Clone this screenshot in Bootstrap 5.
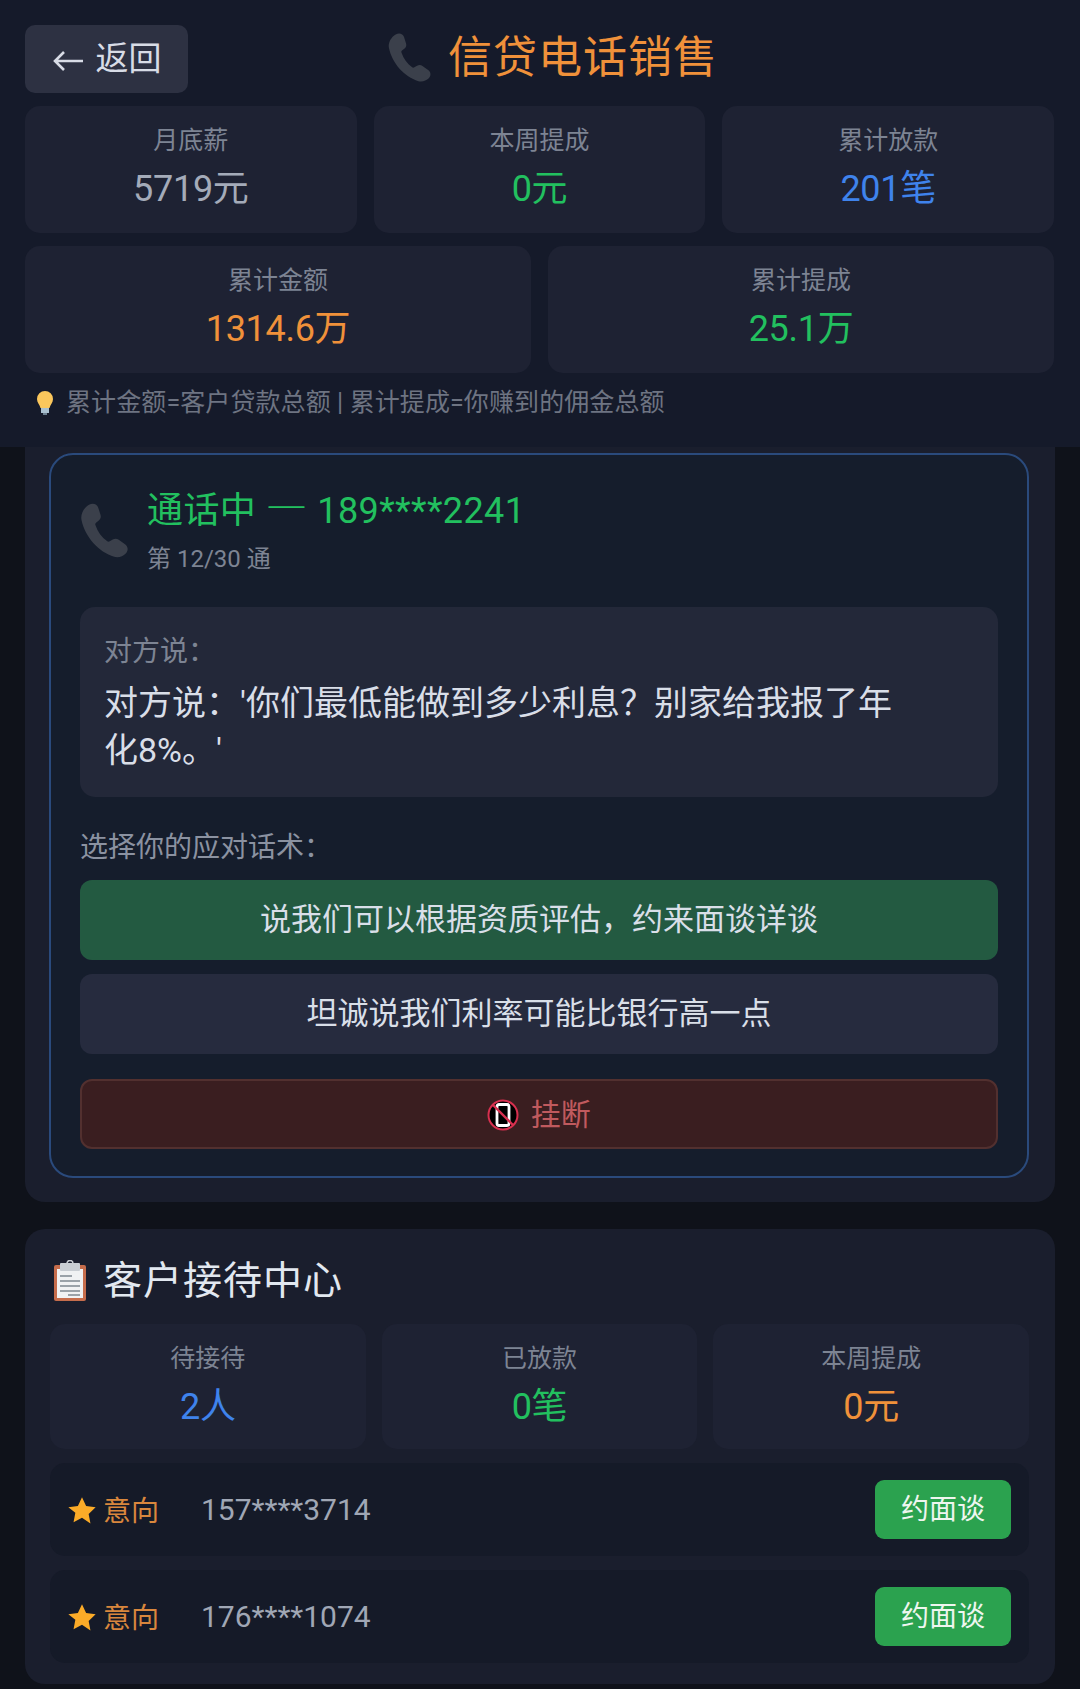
<!DOCTYPE html>
<html lang="zh-CN">
<head>
<meta charset="utf-8">
<title>信贷电话销售</title>
<link href="https://cdn.jsdelivr.net/npm/bootstrap@5.3.0/dist/css/bootstrap.min.css" rel="stylesheet">
<style>
    html, body { background: #0f121a; }
    body { font-family: Roboto, "Noto Sans CJK SC", sans-serif; color: #e2e8f0; width: 1080px; overflow: hidden; }
    .top-bar { background: #151a2a; height: 447px; padding: 25px 26px 0 25px; }
    .back-btn { width: 163px; height: 68px; background: #2d3142; color: #d8dce6; border: 0; border-radius: 10px; font-size: 33px; padding: 0; }
    .back-btn:hover { background: #2d3142; color: #d8dce6; }
    .back-arrow { vertical-align: -3px; margin-right: 12px; margin-left: 0; }
    .page-title { font-size: 44px; font-weight: 400; color: #f0913a; margin: 0; line-height: 1; letter-spacing: 1px; }
    .title-wrap { margin-left: 196px; height: 60px; margin-top: 3px; gap: 10px; }
    .stat-row { gap: 17px; margin-top: 13px; }
    .stat-row + .stat-row { margin-top: 13px; }
    .stat-box { flex: 1 1 0; height: 127px; background: #1e2233; border-radius: 15px; text-align: center; padding-top: 18px; }
    .stat-label { font-size: 25px; color: #7d8493; line-height: 34px; }
    .stat-val { font-size: 36px; line-height: 46px; margin-top: 8px; letter-spacing: -.3px; }
    .c-grey { color: #a4abb9; }
    .c-green { color: #22c05f; }
    .c-blue { color: #3f83ec; }
    .c-orange { color: #f0913a; }
    .hint-line { font-size: 25px; color: #6e7482; margin-top: 13px; padding-left: 11px; line-height: 34px; gap: 12px; letter-spacing: .1px; }
    .panel-box { background: #1a1e2d; border-radius: 0 0 20px 20px; margin: 0 25px; padding: 6px 26px 24px 24px; }
    .call-box { height: 725px; background: #151d2c; border: 2px solid #2a4a7c; border-radius: 24px; padding: 31px 29px 0; }
    .call-head { gap: 11px; margin-left: -4px; }
    .call-title { font-size: 36px; line-height: 50px; color: #22c05f; letter-spacing: .4px; }
    .cjk-dash { font-family: "Noto Sans CJK SC", sans-serif; font-size: 42px; font-weight: 500; line-height: 0; }
    .call-sub { font-size: 24px; line-height: 34px; color: #7d8493; margin-top: 6px; }
    .say-box { height: 190px; background: #232839; border-radius: 15px; margin-top: 31px; padding: 28px 24px; }
    .say-label { font-size: 28px; line-height: 34px; color: #7d8493; }
    .say-text { font-size: 34px; line-height: 47px; color: #d9dee8; margin-top: 11px; width: 800px; }
    .pick-label { font-size: 28px; line-height: 36px; color: #8b92a1; margin-top: 33px; }
    .talk-btn { display: block; width: 100%; height: 80px; border: 0; border-radius: 12px; font-size: 31px; color: #d9dfe8; background: #262b3e; margin-top: 14px; padding: 0; }
    .talk-btn:hover { color: #d9dfe8; background: #262b3e; }
    .talk-green, .talk-green:hover { background: #235a41; }
    .hang-btn, .hang-btn:hover { display: block; width: 100%; height: 70px; margin-top: 25px; background: #3a1e20; border: 2px solid #52302f; border-radius: 12px; color: #c05a5e; font-size: 30px; padding: 0; }
    .hang-icon { vertical-align: -6px; margin-right: 4px; }
    .panel-second { border-radius: 20px; margin-top: 27px; padding: 22px 26px 22px 25px; height: 455px; }
    .section-title { font-size: 39px; line-height: 60px; margin: 0; font-weight: 400; color: #e2e8f0; letter-spacing: 1px; gap: 16px; }
    .section-title svg { margin-left: 3px; }
    .stat-row-sm { gap: 16px; margin-top: 13px; }
    .stat-box-sm { flex: 1 1 0; height: 125px; background: #1e2233; border-radius: 15px; text-align: center; padding-top: 18px; }
    .client-row { height: 93px; background: #151a28; border-radius: 15px; margin-top: 14px; padding: 0 18px 0 17px; }
    .client-tag { font-size: 28px; color: #d9873d; width: 134px; margin-top: 4px; }
    .client-tag svg { margin-right: 6px; vertical-align: -4px; }
    .client-phone { font-size: 30px; color: #a0a7b5; }
    .meet-btn, .meet-btn:hover { width: 136px; height: 59px; background: #2ba24f; border: 0; border-radius: 9px; color: #eef6ef; font-size: 28px; padding: 0; }
</style>
</head>
<body>
    <div class="top-bar">
        <div class="d-flex align-items-start">
            <button class="btn back-btn">
                <svg class="back-arrow" width="32" height="24" viewBox="0 0 32 24"><path d="M31 12H3M12 3l-9 9 9 9" fill="none" stroke="#d8dce6" stroke-width="2.6"/></svg>返回
            </button>
            <div class="title-wrap d-flex align-items-center">
                <svg width="54" height="54" viewBox="0 0 24 24"><path d="M5.200 1.500c1.600-.9 3.200-.3 3.700 1.200l.9 2.800c.3 1 0 1.800-.8 2.400l-1 .8c-.3.3-.4.6-.2 1 .9 2.600 2.400 4.800 4.700 6.400.4.3.7.2 1 0l1.200-.7c.8-.5 1.700-.4 2.400.1l2.500 1.800c1.300.9 1.400 2.600.3 3.700-1.100 1.100-2.900 1.800-4.600 1.300C9 20.400 3.600 14.400 2.200 7.600 1.700 5 3.300 2.600 5.200 1.500z" fill="#3b404b"/></svg>
                <h1 class="page-title">信贷电话销售</h1>
            </div>
        </div>
        <div class="d-flex stat-row">
            <div class="stat-box"><div class="stat-label">月底薪</div><div class="stat-val c-grey">5719元</div></div>
            <div class="stat-box"><div class="stat-label">本周提成</div><div class="stat-val c-green">0元</div></div>
            <div class="stat-box"><div class="stat-label">累计放款</div><div class="stat-val c-blue">201笔</div></div>
        </div>
        <div class="d-flex stat-row">
            <div class="stat-box"><div class="stat-label">累计金额</div><div class="stat-val c-orange">1314.6万</div></div>
            <div class="stat-box"><div class="stat-label">累计提成</div><div class="stat-val c-green">25.1万</div></div>
        </div>
        <div class="hint-line d-flex align-items-center">
            <svg width="18" height="26" viewBox="0 0 18 26"><path d="M9 1a8 8 0 0 0-8 8c0 3.500 2.500 5.500 3.500 9h9c1-3.500 3.500-5.500 3.500-9a8 8 0 0 0-8-8z" fill="#fbc75c"/><rect x="5" y="18" width="8" height="5" fill="#a9c0cf"/><rect x="7" y="23" width="4" height="2" fill="#6d8191"/></svg>
            <span>累计金额=客户贷款总额 | 累计提成=你赚到的佣金总额</span>
        </div>
    </div>

    <div class="panel-box">
        <div class="call-box">
            <div class="d-flex align-items-center call-head">
                <svg width="60" height="60" viewBox="0 0 24 24"><path d="M5.200 1.500c1.600-.9 3.200-.3 3.700 1.200l.9 2.800c.3 1 0 1.800-.8 2.400l-1 .8c-.3.3-.4.6-.2 1 .9 2.600 2.400 4.800 4.700 6.400.4.3.7.2 1 0l1.200-.7c.8-.5 1.700-.4 2.400.1l2.500 1.800c1.300.9 1.400 2.600.3 3.700-1.100 1.100-2.900 1.800-4.600 1.300C9 20.400 3.600 14.400 2.200 7.600 1.700 5 3.300 2.600 5.200 1.500z" fill="#3b404b"/></svg>
                <div>
                    <div class="call-title">通话中 <span class="cjk-dash">—</span> 189****2241</div>
                    <div class="call-sub">第 12/30 通</div>
                </div>
            </div>
            <div class="say-box">
                <div class="say-label">对方说：</div>
                <div class="say-text">对方说：'你们最低能做到多少利息？别家给我报了年化8%。'</div>
            </div>
            <div class="pick-label">选择你的应对话术：</div>
            <button class="btn talk-btn talk-green">说我们可以根据资质评估，约来面谈详谈</button>
            <button class="btn talk-btn">坦诚说我们利率可能比银行高一点</button>
            <button class="btn hang-btn">
                <svg class="hang-icon" width="32" height="32" viewBox="0 0 32 32"><circle cx="16" cy="16" r="14.500" fill="#000" stroke="#d8304f" stroke-width="2"/><rect x="10" y="5.500" width="12" height="21" rx="2" fill="none" stroke="#fff" stroke-width="2.800"/><path d="M6 6l20 20" stroke="#d8304f" stroke-width="2.400"/></svg>
                挂断
            </button>
        </div>
    </div>

    <div class="panel-box panel-second">
        <h2 class="section-title d-flex align-items-center">
            <svg width="34" height="42" viewBox="0 0 34 42"><rect x="1" y="5" width="32" height="36" rx="2" fill="#c66d4c"/><rect x="4" y="9" width="26" height="29" fill="#f0f2f3"/><rect x="7" y="3" width="20" height="8" rx="1" fill="#c9ced3"/><circle cx="17" cy="3.500" r="3" fill="none" stroke="#c9ced3" stroke-width="1.500"/><path d="M7 16h12M7 21h20M7 26h20M7 31h20M15 35h12" stroke="#9aa2a8" stroke-width="2"/></svg>
            客户接待中心
        </h2>
        <div class="d-flex stat-row-sm">
            <div class="stat-box-sm"><div class="stat-label">待接待</div><div class="stat-val c-blue">2人</div></div>
            <div class="stat-box-sm"><div class="stat-label">已放款</div><div class="stat-val c-green">0笔</div></div>
            <div class="stat-box-sm"><div class="stat-label">本周提成</div><div class="stat-val c-orange">0元</div></div>
        </div>
        <div class="client-row d-flex align-items-center">
            <span class="client-tag"><svg width="30" height="29" viewBox="0 0 24 24"><path d="M12 1l3.400 7.300 7.900 1-5.800 5.500 1.500 7.900L12 18l-7 3.700 1.500-7.900L.7 9.300l7.900-1z" fill="#fbab28"/></svg>意向</span>
            <span class="client-phone">157****3714</span>
            <button class="btn meet-btn ms-auto">约面谈</button>
        </div>
        <div class="client-row d-flex align-items-center">
            <span class="client-tag"><svg width="30" height="29" viewBox="0 0 24 24"><path d="M12 1l3.400 7.300 7.900 1-5.800 5.500 1.500 7.900L12 18l-7 3.700 1.500-7.900L.7 9.300l7.900-1z" fill="#fbab28"/></svg>意向</span>
            <span class="client-phone">176****1074</span>
            <button class="btn meet-btn ms-auto">约面谈</button>
        </div>
    </div>

    <script src="https://cdn.jsdelivr.net/npm/bootstrap@5.3.0/dist/js/bootstrap.bundle.min.js"></script>
</body>
</html>
